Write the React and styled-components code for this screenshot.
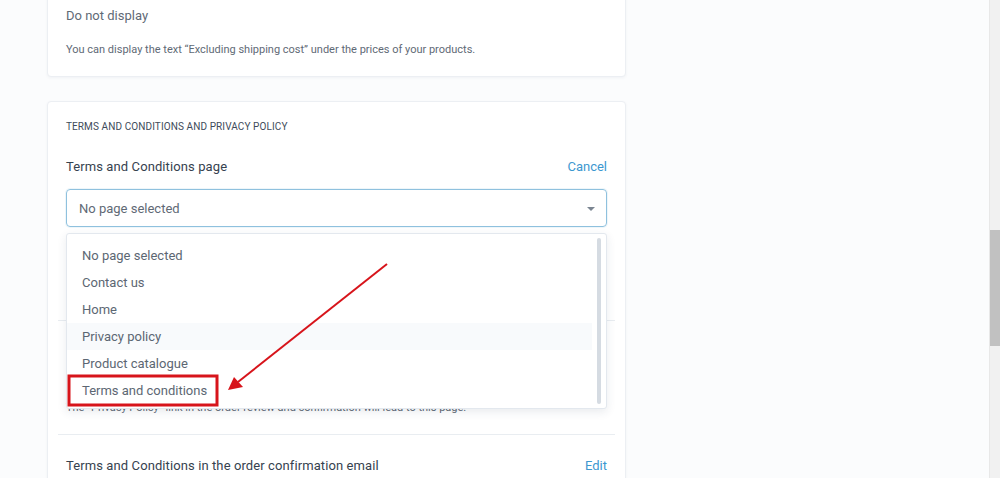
import React from "react";
import styled, { createGlobalStyle } from "styled-components";

const Global = createGlobalStyle`
  html, body { margin: 0; padding: 0; background: #fbfcfd; overflow: hidden; }
  body { font-family: Roboto, "Liberation Sans", Arial, sans-serif; }
  #root { height: 478px; }
`;

const Screen = styled.div`
  display: flex;
  height: 478px;
  overflow: hidden;
  position: relative;
`;

const Main = styled.div`
  flex: 1;
  padding-left: 47px;
  display: flex;
  flex-direction: column;
  gap: 24px;
`;

const BrowserScroll = styled.div`
  width: 10px;
  background: #f1f1f1;
  border-left: 1px solid #e8e8e8;
  display: flex;
  flex-direction: column;
`;

const Thumb = styled.div`
  margin-top: 230px;
  height: 116px;
  background: #c1c1c1;
`;

const Card = styled.section`
  width: 579px;
  background: #fff;
  border: 1px solid #eceff3;
  border-radius: 4px;
  box-shadow: 0 1px 3px rgba(40, 60, 90, 0.05);
  box-sizing: border-box;
  padding: ${(p) => p.$pad};
  margin-top: ${(p) => p.$mt || "0"};
  flex-shrink: 0;
`;

const Value = styled.div`
  font-size: 13px;
  line-height: 20px;
  color: #5f6a76;
  padding-top: ${(p) => p.$pt || "0"};
`;

const Hint = styled.div`
  font-size: 11px;
  line-height: 16px;
  color: #5f6a76;
  margin-top: ${(p) => p.$mt || "0"};
`;

const Heading = styled.div`
  font-size: 10px;
  line-height: 14px;
  color: #3e4b5a;
  text-transform: uppercase;
  letter-spacing: 0.01em;
`;

const Row = styled.div`
  display: flex;
  justify-content: space-between;
  align-items: center;
  margin-top: ${(p) => p.$mt || "0"};
`;

const Title = styled.div`
  font-size: 13px;
  line-height: 20px;
  color: #36424f;
  letter-spacing: 0.1px;
`;

const Link = styled.a`
  font-size: 13px;
  line-height: 20px;
  color: #3c98d0;
  text-decoration: none;
`;

const Field = styled.div`
  position: relative;
  margin-top: 12px;
`;

const Select = styled.div`
  height: 38px;
  box-sizing: border-box;
  border: 1px solid #8fc1de;
  border-radius: 4px;
  box-shadow: 0 0 0 1px rgba(143, 193, 222, 0.15);
  display: flex;
  align-items: center;
  justify-content: space-between;
  padding: 0 11px 0 12px;
  font-size: 13px;
  color: #5f6a76;
`;

const Caret = styled.span`
  width: 0;
  height: 0;
  border-left: 4px solid transparent;
  border-right: 4px solid transparent;
  border-top: 4px solid #7b8591;
  margin-top: 1px;
`;

const Menu = styled.ul`
  position: absolute;
  top: 44px;
  left: 0;
  right: 0;
  height: 176px;
  box-sizing: border-box;
  margin: 0;
  padding: 8px 0 5px;
  list-style: none;
  background: #fff;
  border: 1px solid #e3e8ee;
  border-radius: 3px;
  box-shadow: 0 3px 10px rgba(40, 60, 90, 0.1);
  z-index: 2;
`;

const MenuScroll = styled.div`
  position: absolute;
  right: 5px;
  top: 4px;
  bottom: 4px;
  width: 4px;
  border-radius: 2px;
  background: #d5dbe2;
`;

const Item = styled.li`
  height: 27px;
  display: flex;
  align-items: center;
  padding-left: 15px;
  margin-right: 14px;
  font-size: 13px;
  color: #5c6773;
  background: ${(p) => (p.$hover ? "#f8fafc" : "transparent")};
`;

const Section = styled.div`
  padding: ${(p) => p.$pad};
`;

const Divider = styled.hr`
  border: 0;
  border-top: 1px solid #e9edf1;
  margin: 0 -8px;
`;

const Annotation = styled.svg`
  position: absolute;
  left: 0;
  top: 0;
  pointer-events: none;
  z-index: 5;
`;

const items = [
  "No page selected",
  "Contact us",
  "Home",
  "Privacy policy",
  "Product catalogue",
  "Terms and conditions",
];

export default function App() {
  return (
    <Screen>
      <Global />
      <Main>
        <Card $pad="0 18px 18px" $mt="-20px">
          <Value $pt="25px">Do not display</Value>
          <Hint $mt="16px">
            You can display the text “Excluding shipping cost” under the prices of your products.
          </Hint>
        </Card>
        <Card $pad="18px 18px 0">
          <Heading>Terms and Conditions and Privacy Policy</Heading>
          <Section $pad="0 0 93px">
            <Row $mt="23px">
              <Title>Terms and Conditions page</Title>
              <Link>Cancel</Link>
            </Row>
            <Field>
              <Select>
                No page selected
                <Caret />
              </Select>
              <Menu>
                {items.map((t) => (
                  <Item key={t} $hover={t === "Privacy policy"}>
                    {t}
                  </Item>
                ))}
                <MenuScroll />
              </Menu>
            </Field>
          </Section>
          <Divider />
          <Section $pad="79px 0 18px">
            <Hint>
              The “Privacy Policy” link in the order review and confirmation will lead to this page.
            </Hint>
          </Section>
          <Divider />
          <Section $pad="21px 0 20px">
            <Row>
              <Title>Terms and Conditions in the order confirmation email</Title>
              <Link>Edit</Link>
            </Row>
          </Section>
        </Card>
      </Main>
      <BrowserScroll>
        <Thumb />
      </BrowserScroll>
      <Annotation width="1000" height="478" viewBox="0 0 1000 478">
        <rect x="69" y="376" width="148" height="29" fill="none" stroke="#d7141b" strokeWidth="3" />
        <line x1="387" y1="264" x2="238" y2="382" stroke="#d7141b" strokeWidth="2" />
        <polygon points="228,390 234,377 243,387" fill="#d7141b" />
      </Annotation>
    </Screen>
  );
}
